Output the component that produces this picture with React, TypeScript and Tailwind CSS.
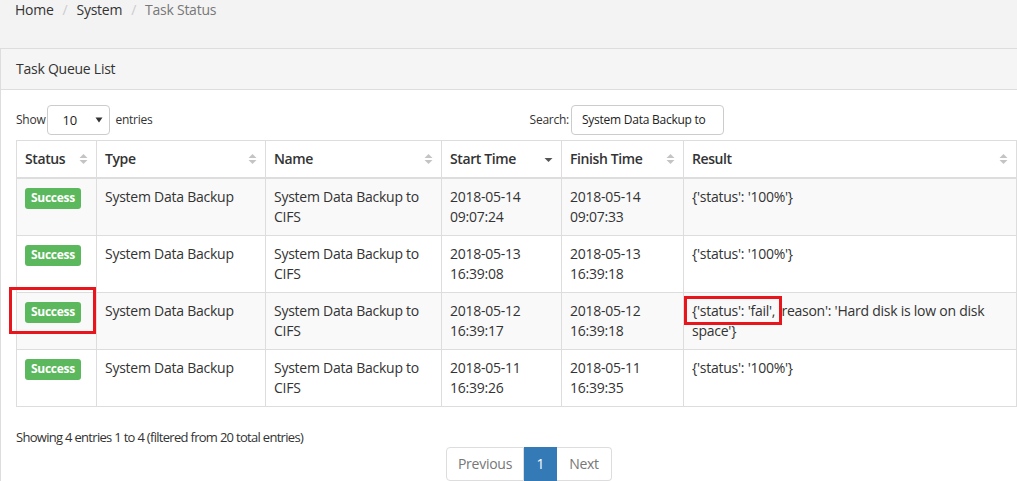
import React from "react";

const rows = [
  { start: ["2018-05-14", "09:07:24"], finish: ["2018-05-14", "09:07:33"], result: "{'status': '100%'}", striped: true },
  { start: ["2018-05-13", "16:39:08"], finish: ["2018-05-13", "16:39:18"], result: "{'status': '100%'}", striped: false },
  { start: ["2018-05-12", "16:39:17"], finish: ["2018-05-12", "16:39:18"], result: "fail", striped: true },
  { start: ["2018-05-11", "16:39:26"], finish: ["2018-05-11", "16:39:35"], result: "{'status': '100%'}", striped: false },
];

function SortBoth() {
  return (
    <svg width="9" height="12" viewBox="0 0 9 12" className="shrink-0">
      <path d="M0.5 5 L4.5 1 L8.5 5 Z" fill="#c4c4c4" />
      <path d="M0.5 7 L4.5 11 L8.5 7 Z" fill="#c4c4c4" />
    </svg>
  );
}

function SortDesc() {
  return (
    <svg width="9" height="12" viewBox="0 0 9 12" className="shrink-0">
      <path d="M0.5 5 L4.5 9 L8.5 5 Z" fill="#555" />
    </svg>
  );
}

function Th({ label, w, icon }: { label: string; w: number; icon: React.ReactNode }) {
  return (
    <th
      style={{ width: w }}
      className="border border-[#ddd] border-b-2 px-2 py-2 text-left font-semibold tracking-[-0.4px] align-bottom"
    >
      <div className="flex items-center justify-between">
        <span>{label}</span>
        {icon}
      </div>
    </th>
  );
}

export default function App() {
  return (
    <div
      className="w-[1017px] h-[481px] overflow-hidden bg-white text-[14px] leading-[20px] text-[#333] tracking-[-0.25px] relative"
      style={{ fontFamily: '"Open Sans", "Noto Sans", sans-serif' }}
    >
      {/* breadcrumb */}
      <div className="h-[48px] bg-[#f3f3f3] pl-[15px] flex items-start">
        <div className="flex items-center leading-[20px]">
          <span className="text-[#333]">Home</span>
          <span className="text-[#ccc] px-[9px]">/</span>
          <span className="text-[#333]">System</span>
          <span className="text-[#ccc] px-[9px]">/</span>
          <span className="text-[#777]">Task Status</span>
        </div>
      </div>

      {/* panel */}
      <div className="border-l border-t border-[#ddd] bg-white">
        <div className="h-[41px] bg-[#f5f5f5] border-b border-[#ddd] pl-[15px] flex items-center">
          Task Queue List
        </div>
        <div className="pl-[15px] pr-[1px] pt-[15px]">
          <div className="w-[708px] h-[30px] flex items-center justify-between text-[12px] text-[#333]">
            <div className="flex items-center">
              <span>Show</span>
              <div className="ml-[2px] mr-[5px] w-[63px] h-[30px] border border-[#ccc] rounded-[4px] flex items-center justify-between pl-[14px] pr-[6px] text-[13px] text-[#222]">
                <span>10</span>
                <svg width="8" height="6" viewBox="0 0 8 6">
                  <path d="M0.5 0.5 L7.5 0.5 L4 5.5 Z" fill="#333" />
                </svg>
              </div>
              <span>entries</span>
            </div>
            <div className="flex items-center">
              <span>Search:</span>
              <div className="ml-[2px] w-[153px] h-[30px] border border-[#ccc] rounded-[4px] flex items-center pl-[10px] text-[12px] text-[#222]">
                System Data Backup to
              </div>
            </div>
          </div>

          <table className="mt-[5px] w-[1000px] border-collapse table-fixed">
            <thead>
              <tr>
                <Th label="Status" w={80} icon={<SortBoth />} />
                <Th label="Type" w={169} icon={<SortBoth />} />
                <Th label="Name" w={176} icon={<SortBoth />} />
                <Th label="Start Time" w={120} icon={<SortDesc />} />
                <Th label="Finish Time" w={122} icon={<SortBoth />} />
                <Th label="Result" w={333} icon={<SortBoth />} />
              </tr>
            </thead>
            <tbody>
              {rows.map((r, i) => (
                <tr key={i} className={r.striped ? "bg-[#f9f9f9]" : "bg-white"}>
                  <td className="border border-[#ddd] px-2 py-2 align-top">
                    <span className="inline-flex w-[56px] h-[21px] items-center justify-center rounded-[3px] bg-[#5cb85c] text-white text-[12px] font-bold leading-none">
                      Success
                    </span>
                  </td>
                  <td className="border border-[#ddd] px-2 py-2 align-top">System Data Backup</td>
                  <td className="border border-[#ddd] px-2 py-2 align-top">System Data Backup to CIFS</td>
                  <td className="border border-[#ddd] px-2 py-2 align-top">
                    {r.start[0]}
                    <br />
                    {r.start[1]}
                  </td>
                  <td className="border border-[#ddd] px-2 py-2 align-top">
                    {r.finish[0]}
                    <br />
                    {r.finish[1]}
                  </td>
                  <td className="border border-[#ddd] px-2 py-2 align-top">
                    {r.result === "fail"
                      ? "{'status': 'fail', 'reason': 'Hard disk is low on disk space'}"
                      : r.result}
                  </td>
                </tr>
              ))}
            </tbody>
          </table>

          <div className="mt-[20px] text-[13px] tracking-[-0.7px] text-[#333] leading-[20px]">
            Showing 4 entries 1 to 4 (filtered from 20 total entries)
          </div>
          <div className="ml-[430px] flex h-[34px]">
            <div className="w-[78px] border border-[#ddd] rounded-l-[4px] flex items-center justify-center text-[#777]">
              Previous
            </div>
            <div className="w-[33px] bg-[#337ab7] border border-[#337ab7] flex items-center justify-center text-white">
              1
            </div>
            <div className="w-[55px] border border-[#ddd] border-l-0 rounded-r-[4px] flex items-center justify-center text-[#777]">
              Next
            </div>
          </div>
        </div>
      </div>

      {/* annotation boxes */}
      <div className="absolute left-[9px] top-[287px] w-[87px] h-[47px] border-[3px] border-[#e8151d]" />
      <div className="absolute left-[684px] top-[296px] w-[98px] h-[29px] border-[3px] border-[#e8151d]" />
    </div>
  );
}
